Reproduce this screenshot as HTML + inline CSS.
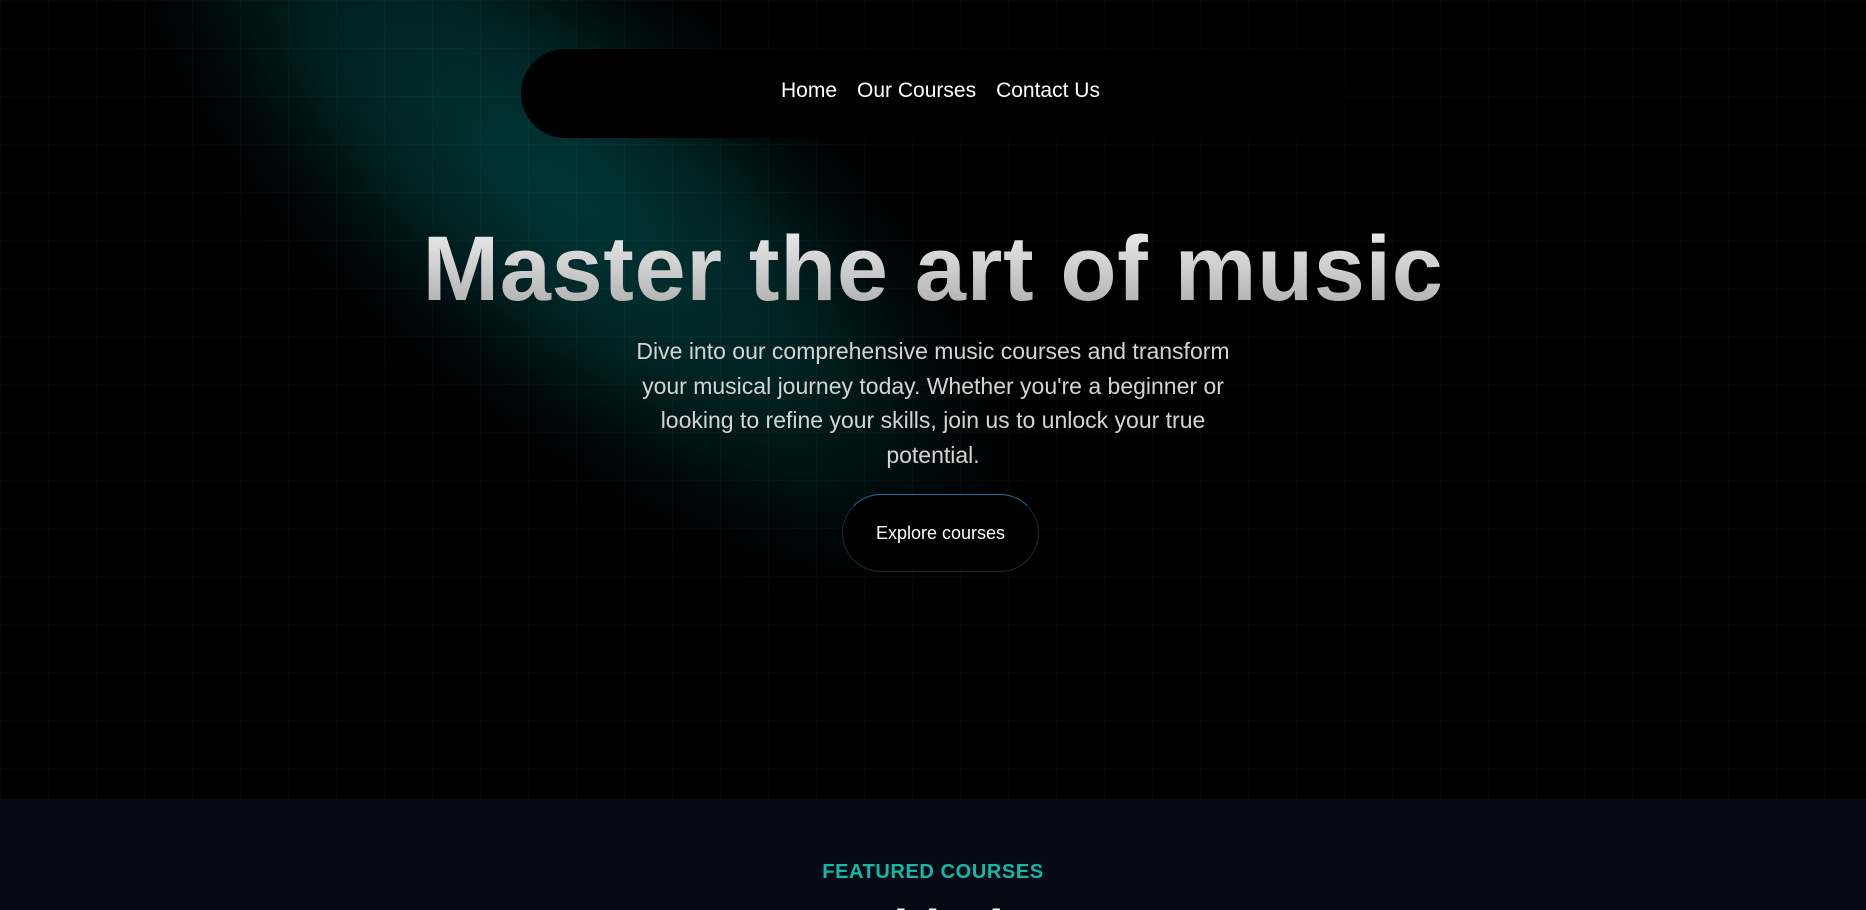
<!DOCTYPE html>
<html><head><meta charset="utf-8"><style>
*{margin:0;padding:0;box-sizing:border-box}
html,body{width:1866px;height:910px;overflow:hidden;background:#000;font-family:"Liberation Sans",sans-serif;position:relative}
.hero{position:absolute;left:0;top:0;width:1866px;height:799px;background:#000;overflow:hidden}
.glow{position:absolute;left:40px;top:0px;width:1050px;height:380px;border-radius:50%;background:radial-gradient(ellipse at center,rgba(0,62,60,.95) 0%,rgba(0,50,50,.7) 40%,rgba(0,40,40,0) 72%);transform:rotate(40deg);transform-origin:center;filter:blur(40px)}
.grid{position:absolute;inset:0;background-image:linear-gradient(rgba(255,255,255,.022) 1px,transparent 1px),linear-gradient(90deg,rgba(255,255,255,.022) 1px,transparent 1px);background-size:48px 48px}
.nav{position:absolute;left:521px;top:49px;width:824px;height:89px;border-radius:45px;background:#000}
.links{position:absolute;top:79px;left:781px;font-size:21px;color:#fff;white-space:nowrap}
.links span{margin-right:20px}
h1{position:absolute;top:219px;left:0;width:1866px;text-align:center;font-size:92px;letter-spacing:.6px;font-weight:bold;background:linear-gradient(#f2f2f2,#a8a8a8);-webkit-background-clip:text;background-clip:text;color:transparent;line-height:100px}
p.sub{position:absolute;top:334px;left:583px;width:700px;text-align:center;font-size:23px;line-height:34.5px;color:#d4d4d4}
.btn{position:absolute;left:842px;top:494px;width:197px;height:78px;border-radius:39px;border:1px solid #1e2a3a;border-top-color:#1b6f9a;background:#000;color:#fff;font-size:18px;text-align:center;line-height:76px}
.sec{position:absolute;left:0;top:799px;width:1866px;height:111px;background:#050a14;overflow:hidden}
.feat{position:absolute;width:1866px;text-align:center;color:#14b8a6;font-size:20px;font-weight:bold;letter-spacing:.6px}
.h2{position:absolute;width:1866px;text-align:center;color:#fff;font-size:52px;font-weight:bold}
</style></head><body>
<div class="hero">
<div class="glow"></div>
<div class="grid"></div>
<div class="nav"></div>
<div class="links"><span>Home</span><span>Our Courses</span><span>Contact Us</span></div>
<h1>Master the art of music</h1>
<p class="sub">Dive into our comprehensive music courses and transform<br>your musical journey today. Whether you're a beginner or<br>looking to refine your skills, join us to unlock your true<br>potential.</p>
<div class="btn">Explore courses</div>
</div>
<div class="sec">
<div class="feat" style="top:62px">FEATURED COURSES</div>
<div class="h2" style="top:100px">Learn With the Best</div>
</div>
</body></html>
